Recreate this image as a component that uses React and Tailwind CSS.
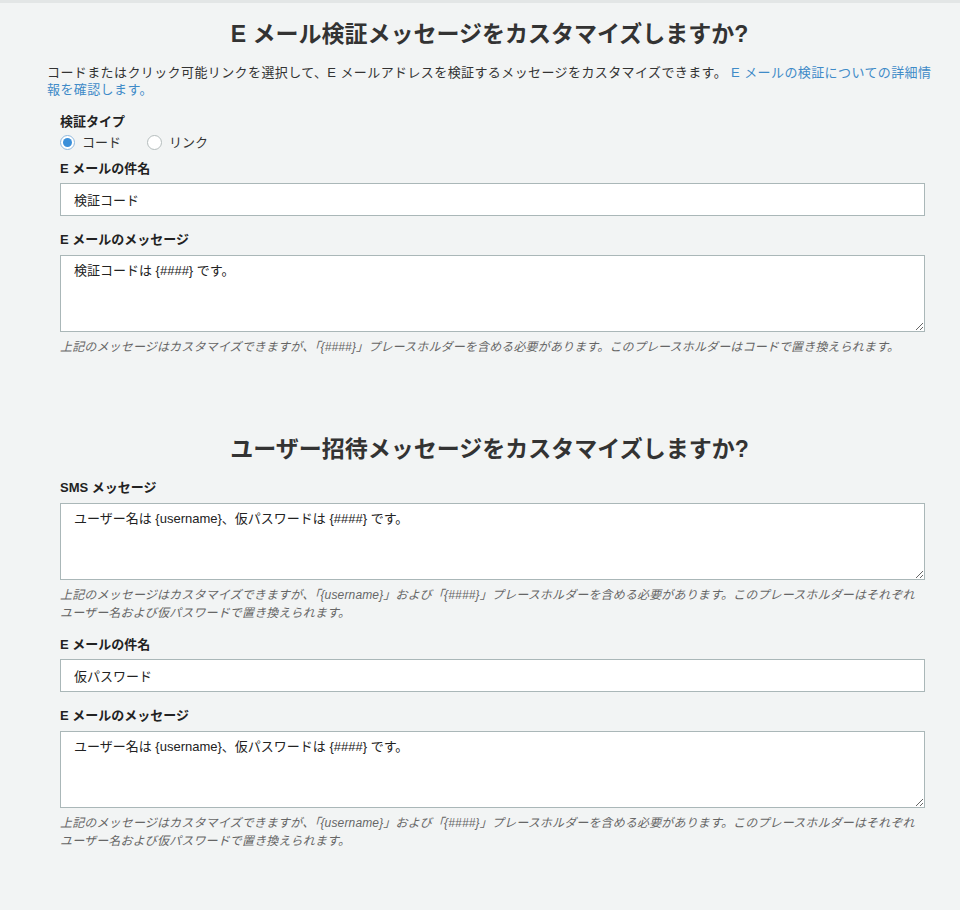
import React from 'react';

const font = { fontFamily: '"Liberation Sans", "Noto Sans CJK JP", sans-serif' };

const Label = ({ children }) => (
  <div className="text-[13px] font-bold text-[#222] leading-[18px]">{children}</div>
);

const Help = ({ children }) => (
  <p className="mt-[6px] text-[12px] tracking-[0.15px] italic leading-[18px] text-[#666]">{children}</p>
);

const TextInput = ({ value }) => (
  <input
    readOnly
    defaultValue={value}
    className="mt-[5px] block w-full h-[33px] border border-[#aab7b8] bg-white px-[13px] text-[13px] text-[#222] outline-none"
    style={font}
  />
);

const TextArea = ({ value }) => (
  <textarea
    readOnly
    defaultValue={value}
    className="mt-[6px] block w-full h-[77px] border border-[#aab7b8] bg-white px-[13px] py-[6px] text-[13px] leading-[18px] text-[#222] outline-none"
    style={font}
  />
);

const Radio = ({ checked, label }) => (
  <label className="flex items-center gap-[7px] text-[13px] text-[#333]">
    <span
      className={
        'flex h-[15px] w-[15px] items-center justify-center rounded-full border ' +
        (checked ? 'border-[#8fb8de] bg-white' : 'border-[#b5bdbd] bg-white')
      }
    >
      {checked && <span className="h-[9px] w-[9px] rounded-full bg-[#3b8fd9]" />}
    </span>
    {label}
  </label>
);

export default function App() {
  const userMsg = 'ユーザー名は {username}、仮パスワードは {####} です。';
  const userHelp =
    '上記のメッセージはカスタマイズできますが、「{username}」および「{####}」プレースホルダーを含める必要があります。このプレースホルダーはそれぞれユーザー名および仮パスワードで置き換えられます。';

  return (
    <div className="min-h-[910px] bg-[#f2f4f4] border-t-[3px] border-[#e3e6e6]" style={font}>
      <section className="pl-[47px] pr-[28px] pt-[16px]">
        <h2 className="text-center text-[23px] font-bold leading-[30px] text-[#333]">
          E メール検証メッセージをカスタマイズしますか?
        </h2>
        <p className="mt-[15px] text-[13px] tracking-[0.4px] leading-[17px] text-[#333]">
          コードまたはクリック可能リンクを選択して、E メールアドレスを検証するメッセージをカスタマイズできます。{' '}
          <a className="text-[#3f8bc8]">E メールの検証についての詳細情報を確認します。</a>
        </p>
        <div className="pl-[13px] pr-[7px]">
          <div className="mt-[15px]">
            <Label>検証タイプ</Label>
            <div className="mt-[2px] flex gap-[26px]">
              <Radio checked label="コード" />
              <Radio label="リンク" />
            </div>
          </div>
          <div className="mt-[7px]">
            <Label>E メールの件名</Label>
            <TextInput value="検証コード" />
          </div>
          <div className="mt-[15px]">
            <Label>E メールのメッセージ</Label>
            <TextArea value="検証コードは {####} です。" />
            <Help>
              上記のメッセージはカスタマイズできますが、「{'{####}'}」プレースホルダーを含める必要があります。このプレースホルダーはコードで置き換えられます。
            </Help>
          </div>
        </div>
      </section>

      <section className="pl-[47px] pr-[28px] pt-[78px]">
        <h2 className="text-center text-[23px] font-bold leading-[30px] text-[#333]">
          ユーザー招待メッセージをカスタマイズしますか?
        </h2>
        <div className="pl-[13px] pr-[7px]">
          <div className="mt-[15px]">
            <Label>SMS メッセージ</Label>
            <TextArea value={userMsg} />
            <Help>{userHelp}</Help>
          </div>
          <div className="mt-[14px]">
            <Label>E メールの件名</Label>
            <TextInput value="仮パスワード" />
          </div>
          <div className="mt-[15px]">
            <Label>E メールのメッセージ</Label>
            <TextArea value={userMsg} />
            <Help>{userHelp}</Help>
          </div>
        </div>
      </section>
    </div>
  );
}
